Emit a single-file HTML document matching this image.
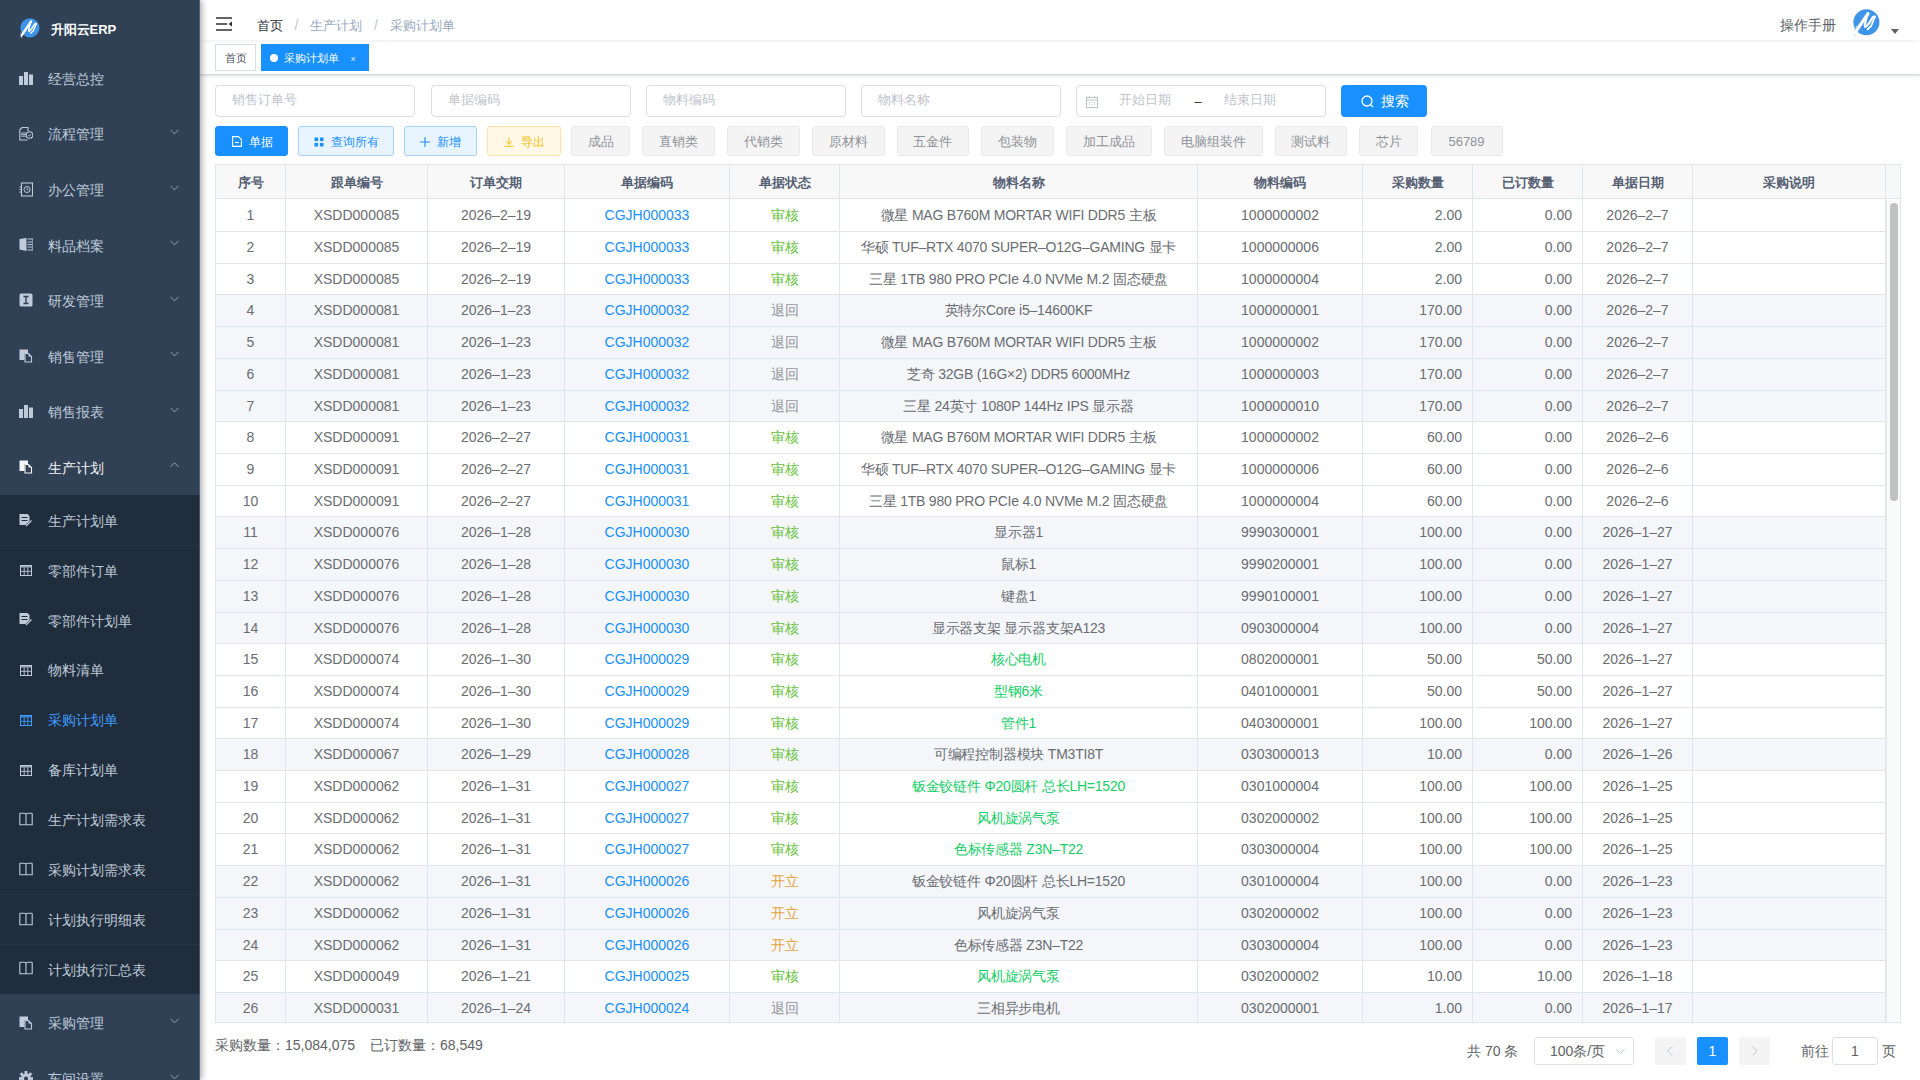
<!DOCTYPE html><html><head><meta charset="utf-8"><style>
*{box-sizing:border-box;margin:0;padding:0}
html,body{width:1920px;height:1080px;overflow:hidden;background:#fff;font-family:'Liberation Sans', sans-serif;color:#606266}
.abs{position:absolute}
#side{position:absolute;left:0;top:0;width:200px;height:1080px;background:#304156;box-shadow:2px 0 6px rgba(0,21,41,.35);z-index:5;overflow:hidden}
.mi{position:absolute;left:0;width:200px;color:#bfcbd9;font-size:14px;white-space:nowrap}
.mi .t{position:absolute;left:48px;top:0;font-size:13.5px}
.mi svg.ic{position:absolute;left:19px}
.mi svg.ch{position:absolute;left:170.2px}
.sub{position:absolute;left:0;width:200px;background:#1f2d3d}
.txt{position:absolute;white-space:nowrap}
.inp{position:absolute;top:84.5px;height:32.2px;border:1px solid #dcdfe6;border-radius:4px;background:#fff}
.inp span{position:absolute;left:16px;top:-0.3px;line-height:30px;font-size:13px;color:#c0c4cc}
.btn{position:absolute;top:126px;height:30px;border-radius:3px;font-size:12px;line-height:31px;text-align:center;border:1px solid}
.gbtn{background:#f4f4f5;border-color:#e9e9eb;color:#909399;font-size:13px;line-height:29.5px}
.cell{position:absolute;white-space:nowrap;font-size:14px;overflow:hidden}
</style></head><body>

<div id="side">
<svg class="abs" style="left:19.5px;top:17.6px;overflow:visible" width="20" height="20" viewBox="0 0 27 27">
<circle cx="13.4" cy="13.2" r="13" fill="#3d94e8"/>
<path d="M2.2 23.5 L15 4.6" stroke="#fff" stroke-width="3.2" stroke-linecap="round"/>
<path d="M15 4.6 Q13 9 12.3 13.7 Q11.4 17.6 12.2 17.8 Q14.5 17.5 19.7 8.3 Q21 7.2 22 7.7" stroke="#fff" stroke-width="2.2" fill="none" stroke-linecap="round" stroke-linejoin="round"/>
<path d="M22 7.7 L18 17.3 Q16 19 14.6 20.3" stroke="#fff" stroke-width="1.8" fill="none" stroke-linecap="round"/>
<circle cx="1.5" cy="20.5" r="1" fill="#9fc3ea"/><circle cx="3.2" cy="17.5" r="0.8" fill="#9fc3ea"/><circle cx="1.8" cy="26" r="0.9" fill="#9fc3ea"/>
</svg>
<div class="txt" style="left:50.5px;top:20.5px;font-size:13px;font-weight:bold;color:#fff;line-height:18px">升阳云ERP</div>
<div class="mi" style="top:50.70px;height:55.54px;color:#bfcbd9">
<svg class="ic" style="top:20px" width="14" height="15" viewBox="0 0 14 15"><rect x="0" y="5" width="4" height="9" fill="#bfcbd9"/><rect x="5" y="1" width="4" height="13" fill="#bfcbd9"/><rect x="10" y="3.5" width="4" height="10.5" fill="#bfcbd9"/></svg>
<div class="t" style="top:1.2px;line-height:55.54px">经营总控</div>
</div>
<div class="mi" style="top:106.24px;height:55.54px;color:#bfcbd9">
<svg class="ic" style="top:20px" width="14" height="15" viewBox="0 0 14 15"><path d="M3 1.5 H9 V5 M3 1.5 L0.8 3.8 V14 H8.5" stroke="#bfcbd9" stroke-width="1.1" fill="none"/><path d="M2 7h5M2 8.6h5M2 10.2h5" stroke="#bfcbd9" stroke-width="0.9"/><circle cx="10.5" cy="9" r="3.3" stroke="#bfcbd9" stroke-width="1.1" fill="none"/><path d="M9.3 9.2l1 1 1.6-2" stroke="#bfcbd9" stroke-width="0.9" fill="none"/></svg>
<div class="t" style="top:1.2px;line-height:55.54px">流程管理</div>
<svg class="ch" style="top:23px" width="9" height="6" viewBox="0 0 9 6"><path d="M0.5 0.8 L4.5 4.8 L8.5 0.8" stroke="#a3adbb" stroke-width="0.9" fill="none"/></svg>
</div>
<div class="mi" style="top:161.78px;height:55.54px;color:#bfcbd9">
<svg class="ic" style="top:20px" width="14" height="15" viewBox="0 0 14 15"><rect x="2.5" y="1" width="11" height="13" stroke="#bfcbd9" stroke-width="1.1" fill="none"/><circle cx="8" cy="7.5" r="3" stroke="#bfcbd9" stroke-width="1" fill="none"/><path d="M8 6v1.7h1.3" stroke="#bfcbd9" stroke-width="0.9" fill="none"/><path d="M0.5 5h2M0.5 7.5h2M0.5 10h2" stroke="#bfcbd9" stroke-width="1"/></svg>
<div class="t" style="top:1.2px;line-height:55.54px">办公管理</div>
<svg class="ch" style="top:23px" width="9" height="6" viewBox="0 0 9 6"><path d="M0.5 0.8 L4.5 4.8 L8.5 0.8" stroke="#a3adbb" stroke-width="0.9" fill="none"/></svg>
</div>
<div class="mi" style="top:217.32px;height:55.54px;color:#bfcbd9">
<svg class="ic" style="top:20px" width="14" height="15" viewBox="0 0 14 15"><path d="M0.5 2 L7.5 1 V14 L0.5 12.5 Z" fill="#bfcbd9"/><path d="M8.5 2h5.5v11h-5.5" stroke="#bfcbd9" stroke-width="1.1" fill="none"/><path d="M8.5 5h5M8.5 7.5h5M8.5 10h5" stroke="#bfcbd9" stroke-width="1"/></svg>
<div class="t" style="top:1.2px;line-height:55.54px">料品档案</div>
<svg class="ch" style="top:23px" width="9" height="6" viewBox="0 0 9 6"><path d="M0.5 0.8 L4.5 4.8 L8.5 0.8" stroke="#a3adbb" stroke-width="0.9" fill="none"/></svg>
</div>
<div class="mi" style="top:272.86px;height:55.54px;color:#bfcbd9">
<svg class="ic" style="top:20px" width="14" height="15" viewBox="0 0 14 15"><rect x="0.5" y="0.5" width="13" height="13" rx="1.5" fill="#bfcbd9"/><path d="M4.5 3.5h5M7 3.5v7M4.5 10.5h5" stroke="#304156" stroke-width="1.4"/></svg>
<div class="t" style="top:1.2px;line-height:55.54px">研发管理</div>
<svg class="ch" style="top:23px" width="9" height="6" viewBox="0 0 9 6"><path d="M0.5 0.8 L4.5 4.8 L8.5 0.8" stroke="#a3adbb" stroke-width="0.9" fill="none"/></svg>
</div>
<div class="mi" style="top:328.40px;height:55.54px;color:#bfcbd9">
<svg class="ic" style="top:20px" width="14" height="15" viewBox="0 0 14 15"><path d="M0.5 1.5 H9 V5 H5.5 V12 H0.5 Z" fill="#bfcbd9"/><path d="M6 5.5 H9.5 L12.5 8.5 V14 H6 Z" stroke="#bfcbd9" stroke-width="1.1" fill="none"/><path d="M9.5 5.5 V8.5 H12.5" fill="#bfcbd9"/></svg>
<div class="t" style="top:1.2px;line-height:55.54px">销售管理</div>
<svg class="ch" style="top:23px" width="9" height="6" viewBox="0 0 9 6"><path d="M0.5 0.8 L4.5 4.8 L8.5 0.8" stroke="#a3adbb" stroke-width="0.9" fill="none"/></svg>
</div>
<div class="mi" style="top:383.94px;height:55.54px;color:#bfcbd9">
<svg class="ic" style="top:20px" width="14" height="15" viewBox="0 0 14 15"><rect x="0" y="5" width="4" height="9" fill="#bfcbd9"/><rect x="5" y="1" width="4" height="13" fill="#bfcbd9"/><rect x="10" y="3.5" width="4" height="10.5" fill="#bfcbd9"/></svg>
<div class="t" style="top:1.2px;line-height:55.54px">销售报表</div>
<svg class="ch" style="top:23px" width="9" height="6" viewBox="0 0 9 6"><path d="M0.5 0.8 L4.5 4.8 L8.5 0.8" stroke="#a3adbb" stroke-width="0.9" fill="none"/></svg>
</div>
<div class="mi" style="top:439.48px;height:55.54px;color:#f4f4f5">
<svg class="ic" style="top:20px" width="14" height="15" viewBox="0 0 14 15"><path d="M0.5 1.5 H9 V5 H5.5 V12 H0.5 Z" fill="#f4f4f5"/><path d="M6 5.5 H9.5 L12.5 8.5 V14 H6 Z" stroke="#f4f4f5" stroke-width="1.1" fill="none"/><path d="M9.5 5.5 V8.5 H12.5" fill="#f4f4f5"/></svg>
<div class="t" style="top:1.2px;line-height:55.54px">生产计划</div>
<svg class="ch" style="top:23px" width="9" height="6" viewBox="0 0 9 6"><path d="M0.5 4.8 L4.5 0.8 L8.5 4.8" stroke="#a3adbb" stroke-width="0.9" fill="none"/></svg>
</div>
<div class="sub" style="top:495px;height:498.75px"></div>
<div class="abs" style="left:0;top:545px;width:200px;height:1px;background:#263345"></div>
<div class="abs" style="left:0;top:894px;width:200px;height:1px;background:#263345"></div>
<div class="abs" style="left:0;top:944px;width:200px;height:1px;background:#263345"></div>
<div class="mi" style="top:495.00px;height:49.875px;color:#bfcbd9">
<svg class="ic" style="top:17.5px" width="14" height="15" viewBox="0 0 14 15"><path d="M0.5 1 H8.5 L10.5 3 V8 L6.5 12 H0.5 Z" fill="#bfcbd9"/><path d="M2.5 4.5h6M2.5 7.5h6" stroke="#1f2d3d" stroke-width="1.1"/><path d="M7 13 L12.5 7.5" stroke="#bfcbd9" stroke-width="1.2"/></svg>
<div class="t" style="top:1.8px;line-height:49.875px">生产计划单</div>
</div>
<div class="mi" style="top:544.88px;height:49.875px;color:#bfcbd9">
<svg class="ic" style="top:17.5px" width="14" height="15" viewBox="0 0 14 15"><rect x="1.5" y="3.5" width="11" height="10" stroke="#bfcbd9" stroke-width="1" fill="none"/><rect x="1" y="3" width="12" height="2.6" fill="#bfcbd9" opacity="0.75"/><path d="M1.5 9.3h11M5.2 5.5v8M8.8 5.5v8" stroke="#bfcbd9" stroke-width="0.9"/></svg>
<div class="t" style="top:1.8px;line-height:49.875px">零部件订单</div>
</div>
<div class="mi" style="top:594.75px;height:49.875px;color:#bfcbd9">
<svg class="ic" style="top:17.5px" width="14" height="15" viewBox="0 0 14 15"><path d="M0.5 1 H8.5 L10.5 3 V8 L6.5 12 H0.5 Z" fill="#bfcbd9"/><path d="M2.5 4.5h6M2.5 7.5h6" stroke="#1f2d3d" stroke-width="1.1"/><path d="M7 13 L12.5 7.5" stroke="#bfcbd9" stroke-width="1.2"/></svg>
<div class="t" style="top:1.8px;line-height:49.875px">零部件计划单</div>
</div>
<div class="mi" style="top:644.62px;height:49.875px;color:#bfcbd9">
<svg class="ic" style="top:17.5px" width="14" height="15" viewBox="0 0 14 15"><rect x="1.5" y="3.5" width="11" height="10" stroke="#bfcbd9" stroke-width="1" fill="none"/><rect x="1" y="3" width="12" height="2.6" fill="#bfcbd9" opacity="0.75"/><path d="M1.5 9.3h11M5.2 5.5v8M8.8 5.5v8" stroke="#bfcbd9" stroke-width="0.9"/></svg>
<div class="t" style="top:1.8px;line-height:49.875px">物料清单</div>
</div>
<div class="mi" style="top:694.50px;height:49.875px;color:#409eff">
<svg class="ic" style="top:17.5px" width="14" height="15" viewBox="0 0 14 15"><rect x="1.5" y="3.5" width="11" height="10" stroke="#409eff" stroke-width="1" fill="none"/><rect x="1" y="3" width="12" height="2.6" fill="#409eff" opacity="0.75"/><path d="M1.5 9.3h11M5.2 5.5v8M8.8 5.5v8" stroke="#409eff" stroke-width="0.9"/></svg>
<div class="t" style="top:1.8px;line-height:49.875px">采购计划单</div>
</div>
<div class="mi" style="top:744.38px;height:49.875px;color:#bfcbd9">
<svg class="ic" style="top:17.5px" width="14" height="15" viewBox="0 0 14 15"><rect x="1.5" y="3.5" width="11" height="10" stroke="#bfcbd9" stroke-width="1" fill="none"/><rect x="1" y="3" width="12" height="2.6" fill="#bfcbd9" opacity="0.75"/><path d="M1.5 9.3h11M5.2 5.5v8M8.8 5.5v8" stroke="#bfcbd9" stroke-width="0.9"/></svg>
<div class="t" style="top:1.8px;line-height:49.875px">备库计划单</div>
</div>
<div class="mi" style="top:794.25px;height:49.875px;color:#bfcbd9">
<svg class="ic" style="top:17.5px" width="14" height="15" viewBox="0 0 14 15"><path d="M0.8 1.2 H5.5 Q7 1.2 7 2.5 V13 M13.2 1.2 H8.5 Q7 1.2 7 2.5 M0.8 1.2 V12.8 H13.2 V1.2" stroke="#bfcbd9" stroke-width="1.1" fill="none"/></svg>
<div class="t" style="top:1.8px;line-height:49.875px">生产计划需求表</div>
</div>
<div class="mi" style="top:844.12px;height:49.875px;color:#bfcbd9">
<svg class="ic" style="top:17.5px" width="14" height="15" viewBox="0 0 14 15"><path d="M0.8 1.2 H5.5 Q7 1.2 7 2.5 V13 M13.2 1.2 H8.5 Q7 1.2 7 2.5 M0.8 1.2 V12.8 H13.2 V1.2" stroke="#bfcbd9" stroke-width="1.1" fill="none"/></svg>
<div class="t" style="top:1.8px;line-height:49.875px">采购计划需求表</div>
</div>
<div class="mi" style="top:894.00px;height:49.875px;color:#bfcbd9">
<svg class="ic" style="top:17.5px" width="14" height="15" viewBox="0 0 14 15"><path d="M0.8 1.2 H5.5 Q7 1.2 7 2.5 V13 M13.2 1.2 H8.5 Q7 1.2 7 2.5 M0.8 1.2 V12.8 H13.2 V1.2" stroke="#bfcbd9" stroke-width="1.1" fill="none"/></svg>
<div class="t" style="top:1.8px;line-height:49.875px">计划执行明细表</div>
</div>
<div class="mi" style="top:943.88px;height:49.875px;color:#bfcbd9">
<svg class="ic" style="top:17.5px" width="14" height="15" viewBox="0 0 14 15"><path d="M0.8 1.2 H5.5 Q7 1.2 7 2.5 V13 M13.2 1.2 H8.5 Q7 1.2 7 2.5 M0.8 1.2 V12.8 H13.2 V1.2" stroke="#bfcbd9" stroke-width="1.1" fill="none"/></svg>
<div class="t" style="top:1.8px;line-height:49.875px">计划执行汇总表</div>
</div>
<div class="mi" style="top:995.05px;height:55.54px">
<svg class="ic" style="top:20px" width="14" height="15" viewBox="0 0 14 15"><path d="M0.5 1.5 H9 V5 H5.5 V12 H0.5 Z" fill="#bfcbd9"/><path d="M6 5.5 H9.5 L12.5 8.5 V14 H6 Z" stroke="#bfcbd9" stroke-width="1.1" fill="none"/><path d="M9.5 5.5 V8.5 H12.5" fill="#bfcbd9"/></svg>
<div class="t" style="top:1.2px;line-height:55.54px">采购管理</div>
<svg class="ch" style="top:23px" width="9" height="6" viewBox="0 0 9 6"><path d="M0.5 0.8 L4.5 4.8 L8.5 0.8" stroke="#a3adbb" stroke-width="0.9" fill="none"/></svg>
</div>
<div class="mi" style="top:1050.59px;height:55.54px">
<svg class="ic" style="top:20px" width="14" height="15" viewBox="0 0 14 15"><g><rect x="5.6" y="0" width="2.8" height="3" fill="#bfcbd9" transform="rotate(0 7 7.5)"/><rect x="5.6" y="0" width="2.8" height="3" fill="#bfcbd9" transform="rotate(45 7 7.5)"/><rect x="5.6" y="0" width="2.8" height="3" fill="#bfcbd9" transform="rotate(90 7 7.5)"/><rect x="5.6" y="0" width="2.8" height="3" fill="#bfcbd9" transform="rotate(135 7 7.5)"/><rect x="5.6" y="0" width="2.8" height="3" fill="#bfcbd9" transform="rotate(180 7 7.5)"/><rect x="5.6" y="0" width="2.8" height="3" fill="#bfcbd9" transform="rotate(225 7 7.5)"/><rect x="5.6" y="0" width="2.8" height="3" fill="#bfcbd9" transform="rotate(270 7 7.5)"/><rect x="5.6" y="0" width="2.8" height="3" fill="#bfcbd9" transform="rotate(315 7 7.5)"/><circle cx="7" cy="7.5" r="5" fill="#bfcbd9"/><circle cx="7" cy="7.5" r="2" fill="#304156"/></g></svg>
<div class="t" style="top:1.2px;line-height:55.54px">车间设置</div>
<svg class="ch" style="top:23px" width="9" height="6" viewBox="0 0 9 6"><path d="M0.5 0.8 L4.5 4.8 L8.5 0.8" stroke="#a3adbb" stroke-width="0.9" fill="none"/></svg>
</div>
<div class="abs" style="left:199px;top:0;width:1px;height:1080px;background:rgba(255,255,255,.18)"></div>
</div>
<div class="abs" style="left:200px;top:0;width:1720px;height:40px;background:#fff;box-shadow:0 1px 4px rgba(0,21,41,.08);z-index:2"></div>
<svg class="abs" style="left:216px;top:17px;z-index:3" width="16" height="14" viewBox="0 0 16 14">
<path d="M0 1h16M0 7h11M0 13h16" stroke="#303133" stroke-width="1.6"/><path d="M16 4.5 L12.5 7 L16 9.5Z" fill="#303133"/></svg>
<div class="txt" style="left:257px;top:16.5px;font-size:13.2px;line-height:18px;z-index:3;color:#303133">首页</div>
<div class="txt" style="left:294.5px;top:16px;font-size:14px;line-height:18px;z-index:3;color:#c0c4cc">/</div>
<div class="txt" style="left:309.5px;top:16.5px;font-size:13.2px;line-height:18px;z-index:3;color:#97a8be">生产计划</div>
<div class="txt" style="left:374px;top:16px;font-size:14px;line-height:18px;z-index:3;color:#c0c4cc">/</div>
<div class="txt" style="left:389.5px;top:16.5px;font-size:13.2px;line-height:18px;z-index:3;color:#97a8be">采购计划单</div>
<div class="txt" style="left:1780px;top:16px;font-size:14px;line-height:18px;z-index:3;color:#5a5e66">操作手册</div>
<svg class="abs" style="left:1852.6px;top:8.8px;z-index:3;overflow:visible" width="27" height="27" viewBox="0 0 27 27">
<circle cx="13.4" cy="13.2" r="13" fill="#3d94e8"/>
<path d="M2.2 23.5 L15 4.6" stroke="#fff" stroke-width="3.2" stroke-linecap="round"/>
<path d="M15 4.6 Q13 9 12.3 13.7 Q11.4 17.6 12.2 17.8 Q14.5 17.5 19.7 8.3 Q21 7.2 22 7.7" stroke="#fff" stroke-width="2.2" fill="none" stroke-linecap="round" stroke-linejoin="round"/>
<path d="M22 7.7 L18 17.3 Q16 19 14.6 20.3" stroke="#fff" stroke-width="1.8" fill="none" stroke-linecap="round"/>
<circle cx="1.5" cy="20.5" r="1" fill="#cfe3fa"/><circle cx="3.2" cy="17.5" r="0.8" fill="#cfe3fa"/><circle cx="1.8" cy="26" r="0.9" fill="#cfe3fa"/>
</svg>
<svg class="abs" style="left:1891px;top:28.8px;z-index:3" width="8" height="5" viewBox="0 0 8 5"><path d="M0 0H8L4 5Z" fill="#606266"/></svg>
<div class="abs" style="left:200px;top:40px;width:1720px;height:35px;background:#fff;border-bottom:1px solid #d8dce5;box-shadow:0 1px 3px 0 rgba(0,0,0,.12),0 0 3px 0 rgba(0,0,0,.04);z-index:1"></div>
<div class="abs" style="left:215px;top:44px;width:41px;height:27px;border:1px solid #d8dce5;background:#fff;z-index:3;font-size:11px;line-height:27px;color:#495060;text-align:center">首页</div>
<div class="abs" style="left:261px;top:44px;width:108px;height:27px;background:#1890ff;border:1px solid #1890ff;z-index:3;font-size:11.5px;line-height:26px;color:#fff"><span class="abs" style="left:8px;top:9px;width:8px;height:8px;border-radius:4px;background:#fff"></span><span class="abs" style="left:21.5px;top:0;font-size:11px">采购计划单</span><span class="abs" style="left:88.5px;top:1px;font-size:9px;opacity:.85">×</span></div>
<div class="inp" style="left:215px;width:200px"><span>销售订单号</span></div>
<div class="inp" style="left:430.5px;width:200px"><span>单据编码</span></div>
<div class="inp" style="left:646px;width:199.5px"><span>物料编码</span></div>
<div class="inp" style="left:861.25px;width:199.5px"><span>物料名称</span></div>
<div class="inp" style="left:1076px;width:250px"><svg class="abs" style="left:9px;top:10.2px" width="12" height="12" viewBox="0 0 12 12"><rect x="0.5" y="1.5" width="11" height="10" stroke="#c0c4cc" fill="none"/><path d="M0.5 4h11M3.5 0v2M8.5 0v2" stroke="#c0c4cc"/><path d="M3 6.5h1M5.5 6.5h1M8 6.5h1M3 8.7h1M5.5 8.7h1M8 8.7h1" stroke="#c0c4cc"/></svg><span style="left:42px">开始日期</span><span style="left:117.5px;top:1.5px;color:#303133">–</span><span style="left:147px">结束日期</span></div>
<div class="abs" style="left:1341px;top:85px;width:86px;height:32px;background:#1890ff;border-radius:4px;color:#fff;font-size:14px;line-height:32px"><svg class="abs" style="left:20px;top:10px" width="13" height="13" viewBox="0 0 13 13"><circle cx="6" cy="6" r="5" stroke="#fff" stroke-width="1.3" fill="none"/><path d="M9.5 9.5l2.5 2.5" stroke="#fff" stroke-width="1.3"/></svg><span class="abs" style="left:40px;top:0">搜索</span></div>
<div class="btn" style="left:215px;width:73px;background:#1890ff;border-color:#1890ff;color:#fff"><svg style="vertical-align:-1px;margin-right:7px;margin-left:2px" width="10" height="11" viewBox="0 0 10 11"><path d="M0.6 0.6H6.5L9.4 3.5V10.4H0.6Z" stroke="#fff" stroke-width="1.1" fill="none"/><path d="M3 6.5h4" stroke="#fff" stroke-width="1.1"/></svg>单据</div>
<div class="btn" style="left:298px;width:96px;background:#e8f4ff;border-color:#a3d3ff;color:#1890ff"><svg style="vertical-align:-1px;margin-right:7px" width="10" height="10" viewBox="0 0 10 10"><rect x="0.5" y="0.5" width="3.6" height="3.6" fill="#1890ff"/><rect x="5.9" y="0.5" width="3.6" height="3.6" fill="#1890ff"/><rect x="0.5" y="5.9" width="3.6" height="3.6" fill="#1890ff"/><rect x="5.9" y="5.9" width="3.6" height="3.6" fill="#1890ff"/></svg>查询所有</div>
<div class="btn" style="left:404px;width:73px;background:#e8f4ff;border-color:#a3d3ff;color:#1890ff"><svg style="vertical-align:-1px;margin-right:7px" width="10" height="10" viewBox="0 0 10 10"><path d="M5 0v10M0 5h10" stroke="#1890ff" stroke-width="1.1"/></svg>新增</div>
<div class="btn" style="left:487px;width:73.5px;background:#fff8e6;border-color:#ffe2a3;color:#ffba00"><svg style="vertical-align:-1px;margin-right:7px;margin-left:2px" width="10" height="10" viewBox="0 0 10 10"><path d="M5 0.5v6.8M1.8 4.3l3.2 3.1 3.2-3.1M0.5 9.3h9" stroke="#ffba00" stroke-width="0.95" fill="none"/></svg>导出</div>
<div class="btn gbtn" style="left:571px;width:59px;">成品</div>
<div class="btn gbtn" style="left:642px;width:73px;">直销类</div>
<div class="btn gbtn" style="left:727px;width:72.5px;">代销类</div>
<div class="btn gbtn" style="left:812px;width:72.5px;">原材料</div>
<div class="btn gbtn" style="left:896.5px;width:72.5px;">五金件</div>
<div class="btn gbtn" style="left:981px;width:72.5px;">包装物</div>
<div class="btn gbtn" style="left:1065.5px;width:86px;">加工成品</div>
<div class="btn gbtn" style="left:1163.5px;width:99px;">电脑组装件</div>
<div class="btn gbtn" style="left:1274.5px;width:72.5px;">测试料</div>
<div class="btn gbtn" style="left:1359.25px;width:59px;">芯片</div>
<div class="btn gbtn" style="left:1430.5px;width:72px;">56789</div>
<div class="abs" style="left:215px;top:164px;width:1686px;height:859px;border:1px solid #dfe6ec;background:#fff;overflow:hidden">
<div class="abs" style="left:0;top:0;width:100%;height:34.40px;background:#f8f8f9;border-bottom:1px solid #dfe6ec"></div>
<div class="cell" style="left:0px;top:1px;width:69px;height:34.40px;line-height:34.40px;text-align:center;font-weight:bold;font-size:13.2px;color:#566073">序号</div>
<div class="cell" style="left:70px;top:1px;width:141px;height:34.40px;line-height:34.40px;text-align:center;font-weight:bold;font-size:13.2px;color:#566073">跟单编号</div>
<div class="cell" style="left:212px;top:1px;width:136px;height:34.40px;line-height:34.40px;text-align:center;font-weight:bold;font-size:13.2px;color:#566073">订单交期</div>
<div class="cell" style="left:349px;top:1px;width:164px;height:34.40px;line-height:34.40px;text-align:center;font-weight:bold;font-size:13.2px;color:#566073">单据编码</div>
<div class="cell" style="left:514px;top:1px;width:109px;height:34.40px;line-height:34.40px;text-align:center;font-weight:bold;font-size:13.2px;color:#566073">单据状态</div>
<div class="cell" style="left:624px;top:1px;width:357px;height:34.40px;line-height:34.40px;text-align:center;font-weight:bold;font-size:13.2px;color:#566073">物料名称</div>
<div class="cell" style="left:982px;top:1px;width:164px;height:34.40px;line-height:34.40px;text-align:center;font-weight:bold;font-size:13.2px;color:#566073">物料编码</div>
<div class="cell" style="left:1147px;top:1px;width:109px;height:34.40px;line-height:34.40px;text-align:center;font-weight:bold;font-size:13.2px;color:#566073">采购数量</div>
<div class="cell" style="left:1257px;top:1px;width:109px;height:34.40px;line-height:34.40px;text-align:center;font-weight:bold;font-size:13.2px;color:#566073">已订数量</div>
<div class="cell" style="left:1367px;top:1px;width:109px;height:34.40px;line-height:34.40px;text-align:center;font-weight:bold;font-size:13.2px;color:#566073">单据日期</div>
<div class="cell" style="left:1477px;top:1px;width:192px;height:34.40px;line-height:34.40px;text-align:center;font-weight:bold;font-size:13.2px;color:#566073">采购说明</div>
<div class="abs" style="left:69px;top:0;width:1px;height:1000px;background:#dfe6ec"></div>
<div class="abs" style="left:211px;top:0;width:1px;height:1000px;background:#dfe6ec"></div>
<div class="abs" style="left:348px;top:0;width:1px;height:1000px;background:#dfe6ec"></div>
<div class="abs" style="left:513px;top:0;width:1px;height:1000px;background:#dfe6ec"></div>
<div class="abs" style="left:623px;top:0;width:1px;height:1000px;background:#dfe6ec"></div>
<div class="abs" style="left:981px;top:0;width:1px;height:1000px;background:#dfe6ec"></div>
<div class="abs" style="left:1146px;top:0;width:1px;height:1000px;background:#dfe6ec"></div>
<div class="abs" style="left:1256px;top:0;width:1px;height:1000px;background:#dfe6ec"></div>
<div class="abs" style="left:1366px;top:0;width:1px;height:1000px;background:#dfe6ec"></div>
<div class="abs" style="left:1476px;top:0;width:1px;height:1000px;background:#dfe6ec"></div>
<div class="abs" style="left:1669px;top:0;width:1px;height:1000px;background:#dfe6ec"></div>
<div class="abs" style="left:0;top:34px;width:1669px;height:32px;background:#fff"></div>
<div class="abs" style="left:0;top:66px;width:1669px;height:1px;background:#dfe6ec"></div>
<div class="cell" style="left:0px;top:34.29px;width:69px;height:32px;line-height:32px;text-align:center;color:#6a6d72">1</div>
<div class="cell" style="left:70px;top:34.29px;width:141px;height:32px;line-height:32px;text-align:center;color:#6a6d72">XSDD000085</div>
<div class="cell" style="left:212px;top:34.29px;width:136px;height:32px;line-height:32px;text-align:center;color:#6a6d72">2026–2–19</div>
<div class="cell" style="left:349px;top:34.29px;width:164px;height:32px;line-height:32px;text-align:center;color:#1890ff">CGJH000033</div>
<div class="cell" style="left:514px;top:34.29px;width:109px;height:32px;line-height:32px;text-align:center;color:#67c23a">审核</div>
<div class="cell" style="left:624px;top:34.29px;width:357px;height:32px;line-height:32px;text-align:center;letter-spacing:-0.22px;color:#6a6d72">微星 MAG B760M MORTAR WIFI DDR5 主板</div>
<div class="cell" style="left:982px;top:34.29px;width:164px;height:32px;line-height:32px;text-align:center;color:#6a6d72">1000000002</div>
<div class="cell" style="left:1147px;top:34.29px;width:109px;height:32px;line-height:32px;text-align:right;padding-right:10px;color:#6a6d72">2.00</div>
<div class="cell" style="left:1257px;top:34.29px;width:109px;height:32px;line-height:32px;text-align:right;padding-right:10px;color:#6a6d72">0.00</div>
<div class="cell" style="left:1367px;top:34.29px;width:109px;height:32px;line-height:32px;text-align:center;color:#6a6d72">2026–2–7</div>
<div class="abs" style="left:0;top:67px;width:1669px;height:31px;background:#fff"></div>
<div class="abs" style="left:0;top:98px;width:1669px;height:1px;background:#dfe6ec"></div>
<div class="cell" style="left:0px;top:66.00px;width:69px;height:32px;line-height:32px;text-align:center;color:#6a6d72">2</div>
<div class="cell" style="left:70px;top:66.00px;width:141px;height:32px;line-height:32px;text-align:center;color:#6a6d72">XSDD000085</div>
<div class="cell" style="left:212px;top:66.00px;width:136px;height:32px;line-height:32px;text-align:center;color:#6a6d72">2026–2–19</div>
<div class="cell" style="left:349px;top:66.00px;width:164px;height:32px;line-height:32px;text-align:center;color:#1890ff">CGJH000033</div>
<div class="cell" style="left:514px;top:66.00px;width:109px;height:32px;line-height:32px;text-align:center;color:#67c23a">审核</div>
<div class="cell" style="left:624px;top:66.00px;width:357px;height:32px;line-height:32px;text-align:center;letter-spacing:-0.22px;color:#6a6d72">华硕 TUF–RTX 4070 SUPER–O12G–GAMING 显卡</div>
<div class="cell" style="left:982px;top:66.00px;width:164px;height:32px;line-height:32px;text-align:center;color:#6a6d72">1000000006</div>
<div class="cell" style="left:1147px;top:66.00px;width:109px;height:32px;line-height:32px;text-align:right;padding-right:10px;color:#6a6d72">2.00</div>
<div class="cell" style="left:1257px;top:66.00px;width:109px;height:32px;line-height:32px;text-align:right;padding-right:10px;color:#6a6d72">0.00</div>
<div class="cell" style="left:1367px;top:66.00px;width:109px;height:32px;line-height:32px;text-align:center;color:#6a6d72">2026–2–7</div>
<div class="abs" style="left:0;top:99px;width:1669px;height:30px;background:#fff"></div>
<div class="abs" style="left:0;top:129px;width:1669px;height:1px;background:#dfe6ec"></div>
<div class="cell" style="left:0px;top:97.71px;width:69px;height:32px;line-height:32px;text-align:center;color:#6a6d72">3</div>
<div class="cell" style="left:70px;top:97.71px;width:141px;height:32px;line-height:32px;text-align:center;color:#6a6d72">XSDD000085</div>
<div class="cell" style="left:212px;top:97.71px;width:136px;height:32px;line-height:32px;text-align:center;color:#6a6d72">2026–2–19</div>
<div class="cell" style="left:349px;top:97.71px;width:164px;height:32px;line-height:32px;text-align:center;color:#1890ff">CGJH000033</div>
<div class="cell" style="left:514px;top:97.71px;width:109px;height:32px;line-height:32px;text-align:center;color:#67c23a">审核</div>
<div class="cell" style="left:624px;top:97.71px;width:357px;height:32px;line-height:32px;text-align:center;letter-spacing:-0.22px;color:#6a6d72">三星 1TB 980 PRO PCIe 4.0 NVMe M.2 固态硬盘</div>
<div class="cell" style="left:982px;top:97.71px;width:164px;height:32px;line-height:32px;text-align:center;color:#6a6d72">1000000004</div>
<div class="cell" style="left:1147px;top:97.71px;width:109px;height:32px;line-height:32px;text-align:right;padding-right:10px;color:#6a6d72">2.00</div>
<div class="cell" style="left:1257px;top:97.71px;width:109px;height:32px;line-height:32px;text-align:right;padding-right:10px;color:#6a6d72">0.00</div>
<div class="cell" style="left:1367px;top:97.71px;width:109px;height:32px;line-height:32px;text-align:center;color:#6a6d72">2026–2–7</div>
<div class="abs" style="left:0;top:130px;width:1669px;height:31px;background:#f4f6fa"></div>
<div class="abs" style="left:0;top:161px;width:1669px;height:1px;background:#dfe6ec"></div>
<div class="cell" style="left:0px;top:129.42px;width:69px;height:32px;line-height:32px;text-align:center;color:#6a6d72">4</div>
<div class="cell" style="left:70px;top:129.42px;width:141px;height:32px;line-height:32px;text-align:center;color:#6a6d72">XSDD000081</div>
<div class="cell" style="left:212px;top:129.42px;width:136px;height:32px;line-height:32px;text-align:center;color:#6a6d72">2026–1–23</div>
<div class="cell" style="left:349px;top:129.42px;width:164px;height:32px;line-height:32px;text-align:center;color:#1890ff">CGJH000032</div>
<div class="cell" style="left:514px;top:129.42px;width:109px;height:32px;line-height:32px;text-align:center;color:#909399">退回</div>
<div class="cell" style="left:624px;top:129.42px;width:357px;height:32px;line-height:32px;text-align:center;letter-spacing:-0.22px;color:#6a6d72">英特尔Core i5–14600KF</div>
<div class="cell" style="left:982px;top:129.42px;width:164px;height:32px;line-height:32px;text-align:center;color:#6a6d72">1000000001</div>
<div class="cell" style="left:1147px;top:129.42px;width:109px;height:32px;line-height:32px;text-align:right;padding-right:10px;color:#6a6d72">170.00</div>
<div class="cell" style="left:1257px;top:129.42px;width:109px;height:32px;line-height:32px;text-align:right;padding-right:10px;color:#6a6d72">0.00</div>
<div class="cell" style="left:1367px;top:129.42px;width:109px;height:32px;line-height:32px;text-align:center;color:#6a6d72">2026–2–7</div>
<div class="abs" style="left:0;top:162px;width:1669px;height:31px;background:#f4f6fa"></div>
<div class="abs" style="left:0;top:193px;width:1669px;height:1px;background:#dfe6ec"></div>
<div class="cell" style="left:0px;top:161.13px;width:69px;height:32px;line-height:32px;text-align:center;color:#6a6d72">5</div>
<div class="cell" style="left:70px;top:161.13px;width:141px;height:32px;line-height:32px;text-align:center;color:#6a6d72">XSDD000081</div>
<div class="cell" style="left:212px;top:161.13px;width:136px;height:32px;line-height:32px;text-align:center;color:#6a6d72">2026–1–23</div>
<div class="cell" style="left:349px;top:161.13px;width:164px;height:32px;line-height:32px;text-align:center;color:#1890ff">CGJH000032</div>
<div class="cell" style="left:514px;top:161.13px;width:109px;height:32px;line-height:32px;text-align:center;color:#909399">退回</div>
<div class="cell" style="left:624px;top:161.13px;width:357px;height:32px;line-height:32px;text-align:center;letter-spacing:-0.22px;color:#6a6d72">微星 MAG B760M MORTAR WIFI DDR5 主板</div>
<div class="cell" style="left:982px;top:161.13px;width:164px;height:32px;line-height:32px;text-align:center;color:#6a6d72">1000000002</div>
<div class="cell" style="left:1147px;top:161.13px;width:109px;height:32px;line-height:32px;text-align:right;padding-right:10px;color:#6a6d72">170.00</div>
<div class="cell" style="left:1257px;top:161.13px;width:109px;height:32px;line-height:32px;text-align:right;padding-right:10px;color:#6a6d72">0.00</div>
<div class="cell" style="left:1367px;top:161.13px;width:109px;height:32px;line-height:32px;text-align:center;color:#6a6d72">2026–2–7</div>
<div class="abs" style="left:0;top:194px;width:1669px;height:31px;background:#f4f6fa"></div>
<div class="abs" style="left:0;top:225px;width:1669px;height:1px;background:#dfe6ec"></div>
<div class="cell" style="left:0px;top:192.84px;width:69px;height:32px;line-height:32px;text-align:center;color:#6a6d72">6</div>
<div class="cell" style="left:70px;top:192.84px;width:141px;height:32px;line-height:32px;text-align:center;color:#6a6d72">XSDD000081</div>
<div class="cell" style="left:212px;top:192.84px;width:136px;height:32px;line-height:32px;text-align:center;color:#6a6d72">2026–1–23</div>
<div class="cell" style="left:349px;top:192.84px;width:164px;height:32px;line-height:32px;text-align:center;color:#1890ff">CGJH000032</div>
<div class="cell" style="left:514px;top:192.84px;width:109px;height:32px;line-height:32px;text-align:center;color:#909399">退回</div>
<div class="cell" style="left:624px;top:192.84px;width:357px;height:32px;line-height:32px;text-align:center;letter-spacing:-0.22px;color:#6a6d72">芝奇 32GB (16G×2) DDR5 6000MHz</div>
<div class="cell" style="left:982px;top:192.84px;width:164px;height:32px;line-height:32px;text-align:center;color:#6a6d72">1000000003</div>
<div class="cell" style="left:1147px;top:192.84px;width:109px;height:32px;line-height:32px;text-align:right;padding-right:10px;color:#6a6d72">170.00</div>
<div class="cell" style="left:1257px;top:192.84px;width:109px;height:32px;line-height:32px;text-align:right;padding-right:10px;color:#6a6d72">0.00</div>
<div class="cell" style="left:1367px;top:192.84px;width:109px;height:32px;line-height:32px;text-align:center;color:#6a6d72">2026–2–7</div>
<div class="abs" style="left:0;top:226px;width:1669px;height:30px;background:#f4f6fa"></div>
<div class="abs" style="left:0;top:256px;width:1669px;height:1px;background:#dfe6ec"></div>
<div class="cell" style="left:0px;top:224.55px;width:69px;height:32px;line-height:32px;text-align:center;color:#6a6d72">7</div>
<div class="cell" style="left:70px;top:224.55px;width:141px;height:32px;line-height:32px;text-align:center;color:#6a6d72">XSDD000081</div>
<div class="cell" style="left:212px;top:224.55px;width:136px;height:32px;line-height:32px;text-align:center;color:#6a6d72">2026–1–23</div>
<div class="cell" style="left:349px;top:224.55px;width:164px;height:32px;line-height:32px;text-align:center;color:#1890ff">CGJH000032</div>
<div class="cell" style="left:514px;top:224.55px;width:109px;height:32px;line-height:32px;text-align:center;color:#909399">退回</div>
<div class="cell" style="left:624px;top:224.55px;width:357px;height:32px;line-height:32px;text-align:center;letter-spacing:-0.22px;color:#6a6d72">三星 24英寸 1080P 144Hz IPS 显示器</div>
<div class="cell" style="left:982px;top:224.55px;width:164px;height:32px;line-height:32px;text-align:center;color:#6a6d72">1000000010</div>
<div class="cell" style="left:1147px;top:224.55px;width:109px;height:32px;line-height:32px;text-align:right;padding-right:10px;color:#6a6d72">170.00</div>
<div class="cell" style="left:1257px;top:224.55px;width:109px;height:32px;line-height:32px;text-align:right;padding-right:10px;color:#6a6d72">0.00</div>
<div class="cell" style="left:1367px;top:224.55px;width:109px;height:32px;line-height:32px;text-align:center;color:#6a6d72">2026–2–7</div>
<div class="abs" style="left:0;top:257px;width:1669px;height:31px;background:#fff"></div>
<div class="abs" style="left:0;top:288px;width:1669px;height:1px;background:#dfe6ec"></div>
<div class="cell" style="left:0px;top:256.26px;width:69px;height:32px;line-height:32px;text-align:center;color:#6a6d72">8</div>
<div class="cell" style="left:70px;top:256.26px;width:141px;height:32px;line-height:32px;text-align:center;color:#6a6d72">XSDD000091</div>
<div class="cell" style="left:212px;top:256.26px;width:136px;height:32px;line-height:32px;text-align:center;color:#6a6d72">2026–2–27</div>
<div class="cell" style="left:349px;top:256.26px;width:164px;height:32px;line-height:32px;text-align:center;color:#1890ff">CGJH000031</div>
<div class="cell" style="left:514px;top:256.26px;width:109px;height:32px;line-height:32px;text-align:center;color:#67c23a">审核</div>
<div class="cell" style="left:624px;top:256.26px;width:357px;height:32px;line-height:32px;text-align:center;letter-spacing:-0.22px;color:#6a6d72">微星 MAG B760M MORTAR WIFI DDR5 主板</div>
<div class="cell" style="left:982px;top:256.26px;width:164px;height:32px;line-height:32px;text-align:center;color:#6a6d72">1000000002</div>
<div class="cell" style="left:1147px;top:256.26px;width:109px;height:32px;line-height:32px;text-align:right;padding-right:10px;color:#6a6d72">60.00</div>
<div class="cell" style="left:1257px;top:256.26px;width:109px;height:32px;line-height:32px;text-align:right;padding-right:10px;color:#6a6d72">0.00</div>
<div class="cell" style="left:1367px;top:256.26px;width:109px;height:32px;line-height:32px;text-align:center;color:#6a6d72">2026–2–6</div>
<div class="abs" style="left:0;top:289px;width:1669px;height:31px;background:#fff"></div>
<div class="abs" style="left:0;top:320px;width:1669px;height:1px;background:#dfe6ec"></div>
<div class="cell" style="left:0px;top:287.97px;width:69px;height:32px;line-height:32px;text-align:center;color:#6a6d72">9</div>
<div class="cell" style="left:70px;top:287.97px;width:141px;height:32px;line-height:32px;text-align:center;color:#6a6d72">XSDD000091</div>
<div class="cell" style="left:212px;top:287.97px;width:136px;height:32px;line-height:32px;text-align:center;color:#6a6d72">2026–2–27</div>
<div class="cell" style="left:349px;top:287.97px;width:164px;height:32px;line-height:32px;text-align:center;color:#1890ff">CGJH000031</div>
<div class="cell" style="left:514px;top:287.97px;width:109px;height:32px;line-height:32px;text-align:center;color:#67c23a">审核</div>
<div class="cell" style="left:624px;top:287.97px;width:357px;height:32px;line-height:32px;text-align:center;letter-spacing:-0.22px;color:#6a6d72">华硕 TUF–RTX 4070 SUPER–O12G–GAMING 显卡</div>
<div class="cell" style="left:982px;top:287.97px;width:164px;height:32px;line-height:32px;text-align:center;color:#6a6d72">1000000006</div>
<div class="cell" style="left:1147px;top:287.97px;width:109px;height:32px;line-height:32px;text-align:right;padding-right:10px;color:#6a6d72">60.00</div>
<div class="cell" style="left:1257px;top:287.97px;width:109px;height:32px;line-height:32px;text-align:right;padding-right:10px;color:#6a6d72">0.00</div>
<div class="cell" style="left:1367px;top:287.97px;width:109px;height:32px;line-height:32px;text-align:center;color:#6a6d72">2026–2–6</div>
<div class="abs" style="left:0;top:321px;width:1669px;height:30px;background:#fff"></div>
<div class="abs" style="left:0;top:351px;width:1669px;height:1px;background:#dfe6ec"></div>
<div class="cell" style="left:0px;top:319.68px;width:69px;height:32px;line-height:32px;text-align:center;color:#6a6d72">10</div>
<div class="cell" style="left:70px;top:319.68px;width:141px;height:32px;line-height:32px;text-align:center;color:#6a6d72">XSDD000091</div>
<div class="cell" style="left:212px;top:319.68px;width:136px;height:32px;line-height:32px;text-align:center;color:#6a6d72">2026–2–27</div>
<div class="cell" style="left:349px;top:319.68px;width:164px;height:32px;line-height:32px;text-align:center;color:#1890ff">CGJH000031</div>
<div class="cell" style="left:514px;top:319.68px;width:109px;height:32px;line-height:32px;text-align:center;color:#67c23a">审核</div>
<div class="cell" style="left:624px;top:319.68px;width:357px;height:32px;line-height:32px;text-align:center;letter-spacing:-0.22px;color:#6a6d72">三星 1TB 980 PRO PCIe 4.0 NVMe M.2 固态硬盘</div>
<div class="cell" style="left:982px;top:319.68px;width:164px;height:32px;line-height:32px;text-align:center;color:#6a6d72">1000000004</div>
<div class="cell" style="left:1147px;top:319.68px;width:109px;height:32px;line-height:32px;text-align:right;padding-right:10px;color:#6a6d72">60.00</div>
<div class="cell" style="left:1257px;top:319.68px;width:109px;height:32px;line-height:32px;text-align:right;padding-right:10px;color:#6a6d72">0.00</div>
<div class="cell" style="left:1367px;top:319.68px;width:109px;height:32px;line-height:32px;text-align:center;color:#6a6d72">2026–2–6</div>
<div class="abs" style="left:0;top:352px;width:1669px;height:31px;background:#f4f6fa"></div>
<div class="abs" style="left:0;top:383px;width:1669px;height:1px;background:#dfe6ec"></div>
<div class="cell" style="left:0px;top:351.39px;width:69px;height:32px;line-height:32px;text-align:center;color:#6a6d72">11</div>
<div class="cell" style="left:70px;top:351.39px;width:141px;height:32px;line-height:32px;text-align:center;color:#6a6d72">XSDD000076</div>
<div class="cell" style="left:212px;top:351.39px;width:136px;height:32px;line-height:32px;text-align:center;color:#6a6d72">2026–1–28</div>
<div class="cell" style="left:349px;top:351.39px;width:164px;height:32px;line-height:32px;text-align:center;color:#1890ff">CGJH000030</div>
<div class="cell" style="left:514px;top:351.39px;width:109px;height:32px;line-height:32px;text-align:center;color:#67c23a">审核</div>
<div class="cell" style="left:624px;top:351.39px;width:357px;height:32px;line-height:32px;text-align:center;letter-spacing:-0.22px;color:#6a6d72">显示器1</div>
<div class="cell" style="left:982px;top:351.39px;width:164px;height:32px;line-height:32px;text-align:center;color:#6a6d72">9990300001</div>
<div class="cell" style="left:1147px;top:351.39px;width:109px;height:32px;line-height:32px;text-align:right;padding-right:10px;color:#6a6d72">100.00</div>
<div class="cell" style="left:1257px;top:351.39px;width:109px;height:32px;line-height:32px;text-align:right;padding-right:10px;color:#6a6d72">0.00</div>
<div class="cell" style="left:1367px;top:351.39px;width:109px;height:32px;line-height:32px;text-align:center;color:#6a6d72">2026–1–27</div>
<div class="abs" style="left:0;top:384px;width:1669px;height:31px;background:#f4f6fa"></div>
<div class="abs" style="left:0;top:415px;width:1669px;height:1px;background:#dfe6ec"></div>
<div class="cell" style="left:0px;top:383.10px;width:69px;height:32px;line-height:32px;text-align:center;color:#6a6d72">12</div>
<div class="cell" style="left:70px;top:383.10px;width:141px;height:32px;line-height:32px;text-align:center;color:#6a6d72">XSDD000076</div>
<div class="cell" style="left:212px;top:383.10px;width:136px;height:32px;line-height:32px;text-align:center;color:#6a6d72">2026–1–28</div>
<div class="cell" style="left:349px;top:383.10px;width:164px;height:32px;line-height:32px;text-align:center;color:#1890ff">CGJH000030</div>
<div class="cell" style="left:514px;top:383.10px;width:109px;height:32px;line-height:32px;text-align:center;color:#67c23a">审核</div>
<div class="cell" style="left:624px;top:383.10px;width:357px;height:32px;line-height:32px;text-align:center;letter-spacing:-0.22px;color:#6a6d72">鼠标1</div>
<div class="cell" style="left:982px;top:383.10px;width:164px;height:32px;line-height:32px;text-align:center;color:#6a6d72">9990200001</div>
<div class="cell" style="left:1147px;top:383.10px;width:109px;height:32px;line-height:32px;text-align:right;padding-right:10px;color:#6a6d72">100.00</div>
<div class="cell" style="left:1257px;top:383.10px;width:109px;height:32px;line-height:32px;text-align:right;padding-right:10px;color:#6a6d72">0.00</div>
<div class="cell" style="left:1367px;top:383.10px;width:109px;height:32px;line-height:32px;text-align:center;color:#6a6d72">2026–1–27</div>
<div class="abs" style="left:0;top:416px;width:1669px;height:31px;background:#f4f6fa"></div>
<div class="abs" style="left:0;top:447px;width:1669px;height:1px;background:#dfe6ec"></div>
<div class="cell" style="left:0px;top:414.81px;width:69px;height:32px;line-height:32px;text-align:center;color:#6a6d72">13</div>
<div class="cell" style="left:70px;top:414.81px;width:141px;height:32px;line-height:32px;text-align:center;color:#6a6d72">XSDD000076</div>
<div class="cell" style="left:212px;top:414.81px;width:136px;height:32px;line-height:32px;text-align:center;color:#6a6d72">2026–1–28</div>
<div class="cell" style="left:349px;top:414.81px;width:164px;height:32px;line-height:32px;text-align:center;color:#1890ff">CGJH000030</div>
<div class="cell" style="left:514px;top:414.81px;width:109px;height:32px;line-height:32px;text-align:center;color:#67c23a">审核</div>
<div class="cell" style="left:624px;top:414.81px;width:357px;height:32px;line-height:32px;text-align:center;letter-spacing:-0.22px;color:#6a6d72">键盘1</div>
<div class="cell" style="left:982px;top:414.81px;width:164px;height:32px;line-height:32px;text-align:center;color:#6a6d72">9990100001</div>
<div class="cell" style="left:1147px;top:414.81px;width:109px;height:32px;line-height:32px;text-align:right;padding-right:10px;color:#6a6d72">100.00</div>
<div class="cell" style="left:1257px;top:414.81px;width:109px;height:32px;line-height:32px;text-align:right;padding-right:10px;color:#6a6d72">0.00</div>
<div class="cell" style="left:1367px;top:414.81px;width:109px;height:32px;line-height:32px;text-align:center;color:#6a6d72">2026–1–27</div>
<div class="abs" style="left:0;top:448px;width:1669px;height:30px;background:#f4f6fa"></div>
<div class="abs" style="left:0;top:478px;width:1669px;height:1px;background:#dfe6ec"></div>
<div class="cell" style="left:0px;top:446.52px;width:69px;height:32px;line-height:32px;text-align:center;color:#6a6d72">14</div>
<div class="cell" style="left:70px;top:446.52px;width:141px;height:32px;line-height:32px;text-align:center;color:#6a6d72">XSDD000076</div>
<div class="cell" style="left:212px;top:446.52px;width:136px;height:32px;line-height:32px;text-align:center;color:#6a6d72">2026–1–28</div>
<div class="cell" style="left:349px;top:446.52px;width:164px;height:32px;line-height:32px;text-align:center;color:#1890ff">CGJH000030</div>
<div class="cell" style="left:514px;top:446.52px;width:109px;height:32px;line-height:32px;text-align:center;color:#67c23a">审核</div>
<div class="cell" style="left:624px;top:446.52px;width:357px;height:32px;line-height:32px;text-align:center;letter-spacing:-0.22px;color:#6a6d72">显示器支架 显示器支架A123</div>
<div class="cell" style="left:982px;top:446.52px;width:164px;height:32px;line-height:32px;text-align:center;color:#6a6d72">0903000004</div>
<div class="cell" style="left:1147px;top:446.52px;width:109px;height:32px;line-height:32px;text-align:right;padding-right:10px;color:#6a6d72">100.00</div>
<div class="cell" style="left:1257px;top:446.52px;width:109px;height:32px;line-height:32px;text-align:right;padding-right:10px;color:#6a6d72">0.00</div>
<div class="cell" style="left:1367px;top:446.52px;width:109px;height:32px;line-height:32px;text-align:center;color:#6a6d72">2026–1–27</div>
<div class="abs" style="left:0;top:479px;width:1669px;height:31px;background:#fff"></div>
<div class="abs" style="left:0;top:510px;width:1669px;height:1px;background:#dfe6ec"></div>
<div class="cell" style="left:0px;top:478.23px;width:69px;height:32px;line-height:32px;text-align:center;color:#6a6d72">15</div>
<div class="cell" style="left:70px;top:478.23px;width:141px;height:32px;line-height:32px;text-align:center;color:#6a6d72">XSDD000074</div>
<div class="cell" style="left:212px;top:478.23px;width:136px;height:32px;line-height:32px;text-align:center;color:#6a6d72">2026–1–30</div>
<div class="cell" style="left:349px;top:478.23px;width:164px;height:32px;line-height:32px;text-align:center;color:#1890ff">CGJH000029</div>
<div class="cell" style="left:514px;top:478.23px;width:109px;height:32px;line-height:32px;text-align:center;color:#67c23a">审核</div>
<div class="cell" style="left:624px;top:478.23px;width:357px;height:32px;line-height:32px;text-align:center;letter-spacing:-0.22px;color:#13ce66">核心电机</div>
<div class="cell" style="left:982px;top:478.23px;width:164px;height:32px;line-height:32px;text-align:center;color:#6a6d72">0802000001</div>
<div class="cell" style="left:1147px;top:478.23px;width:109px;height:32px;line-height:32px;text-align:right;padding-right:10px;color:#6a6d72">50.00</div>
<div class="cell" style="left:1257px;top:478.23px;width:109px;height:32px;line-height:32px;text-align:right;padding-right:10px;color:#6a6d72">50.00</div>
<div class="cell" style="left:1367px;top:478.23px;width:109px;height:32px;line-height:32px;text-align:center;color:#6a6d72">2026–1–27</div>
<div class="abs" style="left:0;top:511px;width:1669px;height:31px;background:#fff"></div>
<div class="abs" style="left:0;top:542px;width:1669px;height:1px;background:#dfe6ec"></div>
<div class="cell" style="left:0px;top:509.94px;width:69px;height:32px;line-height:32px;text-align:center;color:#6a6d72">16</div>
<div class="cell" style="left:70px;top:509.94px;width:141px;height:32px;line-height:32px;text-align:center;color:#6a6d72">XSDD000074</div>
<div class="cell" style="left:212px;top:509.94px;width:136px;height:32px;line-height:32px;text-align:center;color:#6a6d72">2026–1–30</div>
<div class="cell" style="left:349px;top:509.94px;width:164px;height:32px;line-height:32px;text-align:center;color:#1890ff">CGJH000029</div>
<div class="cell" style="left:514px;top:509.94px;width:109px;height:32px;line-height:32px;text-align:center;color:#67c23a">审核</div>
<div class="cell" style="left:624px;top:509.94px;width:357px;height:32px;line-height:32px;text-align:center;letter-spacing:-0.22px;color:#13ce66">型钢6米</div>
<div class="cell" style="left:982px;top:509.94px;width:164px;height:32px;line-height:32px;text-align:center;color:#6a6d72">0401000001</div>
<div class="cell" style="left:1147px;top:509.94px;width:109px;height:32px;line-height:32px;text-align:right;padding-right:10px;color:#6a6d72">50.00</div>
<div class="cell" style="left:1257px;top:509.94px;width:109px;height:32px;line-height:32px;text-align:right;padding-right:10px;color:#6a6d72">50.00</div>
<div class="cell" style="left:1367px;top:509.94px;width:109px;height:32px;line-height:32px;text-align:center;color:#6a6d72">2026–1–27</div>
<div class="abs" style="left:0;top:543px;width:1669px;height:30px;background:#fff"></div>
<div class="abs" style="left:0;top:573px;width:1669px;height:1px;background:#dfe6ec"></div>
<div class="cell" style="left:0px;top:541.65px;width:69px;height:32px;line-height:32px;text-align:center;color:#6a6d72">17</div>
<div class="cell" style="left:70px;top:541.65px;width:141px;height:32px;line-height:32px;text-align:center;color:#6a6d72">XSDD000074</div>
<div class="cell" style="left:212px;top:541.65px;width:136px;height:32px;line-height:32px;text-align:center;color:#6a6d72">2026–1–30</div>
<div class="cell" style="left:349px;top:541.65px;width:164px;height:32px;line-height:32px;text-align:center;color:#1890ff">CGJH000029</div>
<div class="cell" style="left:514px;top:541.65px;width:109px;height:32px;line-height:32px;text-align:center;color:#67c23a">审核</div>
<div class="cell" style="left:624px;top:541.65px;width:357px;height:32px;line-height:32px;text-align:center;letter-spacing:-0.22px;color:#13ce66">管件1</div>
<div class="cell" style="left:982px;top:541.65px;width:164px;height:32px;line-height:32px;text-align:center;color:#6a6d72">0403000001</div>
<div class="cell" style="left:1147px;top:541.65px;width:109px;height:32px;line-height:32px;text-align:right;padding-right:10px;color:#6a6d72">100.00</div>
<div class="cell" style="left:1257px;top:541.65px;width:109px;height:32px;line-height:32px;text-align:right;padding-right:10px;color:#6a6d72">100.00</div>
<div class="cell" style="left:1367px;top:541.65px;width:109px;height:32px;line-height:32px;text-align:center;color:#6a6d72">2026–1–27</div>
<div class="abs" style="left:0;top:574px;width:1669px;height:31px;background:#f4f6fa"></div>
<div class="abs" style="left:0;top:605px;width:1669px;height:1px;background:#dfe6ec"></div>
<div class="cell" style="left:0px;top:573.36px;width:69px;height:32px;line-height:32px;text-align:center;color:#6a6d72">18</div>
<div class="cell" style="left:70px;top:573.36px;width:141px;height:32px;line-height:32px;text-align:center;color:#6a6d72">XSDD000067</div>
<div class="cell" style="left:212px;top:573.36px;width:136px;height:32px;line-height:32px;text-align:center;color:#6a6d72">2026–1–29</div>
<div class="cell" style="left:349px;top:573.36px;width:164px;height:32px;line-height:32px;text-align:center;color:#1890ff">CGJH000028</div>
<div class="cell" style="left:514px;top:573.36px;width:109px;height:32px;line-height:32px;text-align:center;color:#67c23a">审核</div>
<div class="cell" style="left:624px;top:573.36px;width:357px;height:32px;line-height:32px;text-align:center;letter-spacing:-0.22px;color:#6a6d72">可编程控制器模块 TM3TI8T</div>
<div class="cell" style="left:982px;top:573.36px;width:164px;height:32px;line-height:32px;text-align:center;color:#6a6d72">0303000013</div>
<div class="cell" style="left:1147px;top:573.36px;width:109px;height:32px;line-height:32px;text-align:right;padding-right:10px;color:#6a6d72">10.00</div>
<div class="cell" style="left:1257px;top:573.36px;width:109px;height:32px;line-height:32px;text-align:right;padding-right:10px;color:#6a6d72">0.00</div>
<div class="cell" style="left:1367px;top:573.36px;width:109px;height:32px;line-height:32px;text-align:center;color:#6a6d72">2026–1–26</div>
<div class="abs" style="left:0;top:606px;width:1669px;height:31px;background:#fff"></div>
<div class="abs" style="left:0;top:637px;width:1669px;height:1px;background:#dfe6ec"></div>
<div class="cell" style="left:0px;top:605.07px;width:69px;height:32px;line-height:32px;text-align:center;color:#6a6d72">19</div>
<div class="cell" style="left:70px;top:605.07px;width:141px;height:32px;line-height:32px;text-align:center;color:#6a6d72">XSDD000062</div>
<div class="cell" style="left:212px;top:605.07px;width:136px;height:32px;line-height:32px;text-align:center;color:#6a6d72">2026–1–31</div>
<div class="cell" style="left:349px;top:605.07px;width:164px;height:32px;line-height:32px;text-align:center;color:#1890ff">CGJH000027</div>
<div class="cell" style="left:514px;top:605.07px;width:109px;height:32px;line-height:32px;text-align:center;color:#67c23a">审核</div>
<div class="cell" style="left:624px;top:605.07px;width:357px;height:32px;line-height:32px;text-align:center;letter-spacing:-0.22px;color:#13ce66">钣金铰链件 Φ20圆杆 总长LH=1520</div>
<div class="cell" style="left:982px;top:605.07px;width:164px;height:32px;line-height:32px;text-align:center;color:#6a6d72">0301000004</div>
<div class="cell" style="left:1147px;top:605.07px;width:109px;height:32px;line-height:32px;text-align:right;padding-right:10px;color:#6a6d72">100.00</div>
<div class="cell" style="left:1257px;top:605.07px;width:109px;height:32px;line-height:32px;text-align:right;padding-right:10px;color:#6a6d72">100.00</div>
<div class="cell" style="left:1367px;top:605.07px;width:109px;height:32px;line-height:32px;text-align:center;color:#6a6d72">2026–1–25</div>
<div class="abs" style="left:0;top:638px;width:1669px;height:30px;background:#fff"></div>
<div class="abs" style="left:0;top:668px;width:1669px;height:1px;background:#dfe6ec"></div>
<div class="cell" style="left:0px;top:636.78px;width:69px;height:32px;line-height:32px;text-align:center;color:#6a6d72">20</div>
<div class="cell" style="left:70px;top:636.78px;width:141px;height:32px;line-height:32px;text-align:center;color:#6a6d72">XSDD000062</div>
<div class="cell" style="left:212px;top:636.78px;width:136px;height:32px;line-height:32px;text-align:center;color:#6a6d72">2026–1–31</div>
<div class="cell" style="left:349px;top:636.78px;width:164px;height:32px;line-height:32px;text-align:center;color:#1890ff">CGJH000027</div>
<div class="cell" style="left:514px;top:636.78px;width:109px;height:32px;line-height:32px;text-align:center;color:#67c23a">审核</div>
<div class="cell" style="left:624px;top:636.78px;width:357px;height:32px;line-height:32px;text-align:center;letter-spacing:-0.22px;color:#13ce66">风机旋涡气泵</div>
<div class="cell" style="left:982px;top:636.78px;width:164px;height:32px;line-height:32px;text-align:center;color:#6a6d72">0302000002</div>
<div class="cell" style="left:1147px;top:636.78px;width:109px;height:32px;line-height:32px;text-align:right;padding-right:10px;color:#6a6d72">100.00</div>
<div class="cell" style="left:1257px;top:636.78px;width:109px;height:32px;line-height:32px;text-align:right;padding-right:10px;color:#6a6d72">100.00</div>
<div class="cell" style="left:1367px;top:636.78px;width:109px;height:32px;line-height:32px;text-align:center;color:#6a6d72">2026–1–25</div>
<div class="abs" style="left:0;top:669px;width:1669px;height:31px;background:#fff"></div>
<div class="abs" style="left:0;top:700px;width:1669px;height:1px;background:#dfe6ec"></div>
<div class="cell" style="left:0px;top:668.49px;width:69px;height:32px;line-height:32px;text-align:center;color:#6a6d72">21</div>
<div class="cell" style="left:70px;top:668.49px;width:141px;height:32px;line-height:32px;text-align:center;color:#6a6d72">XSDD000062</div>
<div class="cell" style="left:212px;top:668.49px;width:136px;height:32px;line-height:32px;text-align:center;color:#6a6d72">2026–1–31</div>
<div class="cell" style="left:349px;top:668.49px;width:164px;height:32px;line-height:32px;text-align:center;color:#1890ff">CGJH000027</div>
<div class="cell" style="left:514px;top:668.49px;width:109px;height:32px;line-height:32px;text-align:center;color:#67c23a">审核</div>
<div class="cell" style="left:624px;top:668.49px;width:357px;height:32px;line-height:32px;text-align:center;letter-spacing:-0.22px;color:#13ce66">色标传感器 Z3N–T22</div>
<div class="cell" style="left:982px;top:668.49px;width:164px;height:32px;line-height:32px;text-align:center;color:#6a6d72">0303000004</div>
<div class="cell" style="left:1147px;top:668.49px;width:109px;height:32px;line-height:32px;text-align:right;padding-right:10px;color:#6a6d72">100.00</div>
<div class="cell" style="left:1257px;top:668.49px;width:109px;height:32px;line-height:32px;text-align:right;padding-right:10px;color:#6a6d72">100.00</div>
<div class="cell" style="left:1367px;top:668.49px;width:109px;height:32px;line-height:32px;text-align:center;color:#6a6d72">2026–1–25</div>
<div class="abs" style="left:0;top:701px;width:1669px;height:31px;background:#f4f6fa"></div>
<div class="abs" style="left:0;top:732px;width:1669px;height:1px;background:#dfe6ec"></div>
<div class="cell" style="left:0px;top:700.20px;width:69px;height:32px;line-height:32px;text-align:center;color:#6a6d72">22</div>
<div class="cell" style="left:70px;top:700.20px;width:141px;height:32px;line-height:32px;text-align:center;color:#6a6d72">XSDD000062</div>
<div class="cell" style="left:212px;top:700.20px;width:136px;height:32px;line-height:32px;text-align:center;color:#6a6d72">2026–1–31</div>
<div class="cell" style="left:349px;top:700.20px;width:164px;height:32px;line-height:32px;text-align:center;color:#1890ff">CGJH000026</div>
<div class="cell" style="left:514px;top:700.20px;width:109px;height:32px;line-height:32px;text-align:center;color:#e6a23c">开立</div>
<div class="cell" style="left:624px;top:700.20px;width:357px;height:32px;line-height:32px;text-align:center;letter-spacing:-0.22px;color:#6a6d72">钣金铰链件 Φ20圆杆 总长LH=1520</div>
<div class="cell" style="left:982px;top:700.20px;width:164px;height:32px;line-height:32px;text-align:center;color:#6a6d72">0301000004</div>
<div class="cell" style="left:1147px;top:700.20px;width:109px;height:32px;line-height:32px;text-align:right;padding-right:10px;color:#6a6d72">100.00</div>
<div class="cell" style="left:1257px;top:700.20px;width:109px;height:32px;line-height:32px;text-align:right;padding-right:10px;color:#6a6d72">0.00</div>
<div class="cell" style="left:1367px;top:700.20px;width:109px;height:32px;line-height:32px;text-align:center;color:#6a6d72">2026–1–23</div>
<div class="abs" style="left:0;top:733px;width:1669px;height:31px;background:#f4f6fa"></div>
<div class="abs" style="left:0;top:764px;width:1669px;height:1px;background:#dfe6ec"></div>
<div class="cell" style="left:0px;top:731.91px;width:69px;height:32px;line-height:32px;text-align:center;color:#6a6d72">23</div>
<div class="cell" style="left:70px;top:731.91px;width:141px;height:32px;line-height:32px;text-align:center;color:#6a6d72">XSDD000062</div>
<div class="cell" style="left:212px;top:731.91px;width:136px;height:32px;line-height:32px;text-align:center;color:#6a6d72">2026–1–31</div>
<div class="cell" style="left:349px;top:731.91px;width:164px;height:32px;line-height:32px;text-align:center;color:#1890ff">CGJH000026</div>
<div class="cell" style="left:514px;top:731.91px;width:109px;height:32px;line-height:32px;text-align:center;color:#e6a23c">开立</div>
<div class="cell" style="left:624px;top:731.91px;width:357px;height:32px;line-height:32px;text-align:center;letter-spacing:-0.22px;color:#6a6d72">风机旋涡气泵</div>
<div class="cell" style="left:982px;top:731.91px;width:164px;height:32px;line-height:32px;text-align:center;color:#6a6d72">0302000002</div>
<div class="cell" style="left:1147px;top:731.91px;width:109px;height:32px;line-height:32px;text-align:right;padding-right:10px;color:#6a6d72">100.00</div>
<div class="cell" style="left:1257px;top:731.91px;width:109px;height:32px;line-height:32px;text-align:right;padding-right:10px;color:#6a6d72">0.00</div>
<div class="cell" style="left:1367px;top:731.91px;width:109px;height:32px;line-height:32px;text-align:center;color:#6a6d72">2026–1–23</div>
<div class="abs" style="left:0;top:765px;width:1669px;height:30px;background:#f4f6fa"></div>
<div class="abs" style="left:0;top:795px;width:1669px;height:1px;background:#dfe6ec"></div>
<div class="cell" style="left:0px;top:763.62px;width:69px;height:32px;line-height:32px;text-align:center;color:#6a6d72">24</div>
<div class="cell" style="left:70px;top:763.62px;width:141px;height:32px;line-height:32px;text-align:center;color:#6a6d72">XSDD000062</div>
<div class="cell" style="left:212px;top:763.62px;width:136px;height:32px;line-height:32px;text-align:center;color:#6a6d72">2026–1–31</div>
<div class="cell" style="left:349px;top:763.62px;width:164px;height:32px;line-height:32px;text-align:center;color:#1890ff">CGJH000026</div>
<div class="cell" style="left:514px;top:763.62px;width:109px;height:32px;line-height:32px;text-align:center;color:#e6a23c">开立</div>
<div class="cell" style="left:624px;top:763.62px;width:357px;height:32px;line-height:32px;text-align:center;letter-spacing:-0.22px;color:#6a6d72">色标传感器 Z3N–T22</div>
<div class="cell" style="left:982px;top:763.62px;width:164px;height:32px;line-height:32px;text-align:center;color:#6a6d72">0303000004</div>
<div class="cell" style="left:1147px;top:763.62px;width:109px;height:32px;line-height:32px;text-align:right;padding-right:10px;color:#6a6d72">100.00</div>
<div class="cell" style="left:1257px;top:763.62px;width:109px;height:32px;line-height:32px;text-align:right;padding-right:10px;color:#6a6d72">0.00</div>
<div class="cell" style="left:1367px;top:763.62px;width:109px;height:32px;line-height:32px;text-align:center;color:#6a6d72">2026–1–23</div>
<div class="abs" style="left:0;top:796px;width:1669px;height:31px;background:#fff"></div>
<div class="abs" style="left:0;top:827px;width:1669px;height:1px;background:#dfe6ec"></div>
<div class="cell" style="left:0px;top:795.33px;width:69px;height:32px;line-height:32px;text-align:center;color:#6a6d72">25</div>
<div class="cell" style="left:70px;top:795.33px;width:141px;height:32px;line-height:32px;text-align:center;color:#6a6d72">XSDD000049</div>
<div class="cell" style="left:212px;top:795.33px;width:136px;height:32px;line-height:32px;text-align:center;color:#6a6d72">2026–1–21</div>
<div class="cell" style="left:349px;top:795.33px;width:164px;height:32px;line-height:32px;text-align:center;color:#1890ff">CGJH000025</div>
<div class="cell" style="left:514px;top:795.33px;width:109px;height:32px;line-height:32px;text-align:center;color:#67c23a">审核</div>
<div class="cell" style="left:624px;top:795.33px;width:357px;height:32px;line-height:32px;text-align:center;letter-spacing:-0.22px;color:#13ce66">风机旋涡气泵</div>
<div class="cell" style="left:982px;top:795.33px;width:164px;height:32px;line-height:32px;text-align:center;color:#6a6d72">0302000002</div>
<div class="cell" style="left:1147px;top:795.33px;width:109px;height:32px;line-height:32px;text-align:right;padding-right:10px;color:#6a6d72">10.00</div>
<div class="cell" style="left:1257px;top:795.33px;width:109px;height:32px;line-height:32px;text-align:right;padding-right:10px;color:#6a6d72">10.00</div>
<div class="cell" style="left:1367px;top:795.33px;width:109px;height:32px;line-height:32px;text-align:center;color:#6a6d72">2026–1–18</div>
<div class="abs" style="left:0;top:828px;width:1669px;height:29px;background:#f4f6fa"></div>
<div class="cell" style="left:0px;top:827.04px;width:69px;height:32px;line-height:32px;text-align:center;color:#6a6d72">26</div>
<div class="cell" style="left:70px;top:827.04px;width:141px;height:32px;line-height:32px;text-align:center;color:#6a6d72">XSDD000031</div>
<div class="cell" style="left:212px;top:827.04px;width:136px;height:32px;line-height:32px;text-align:center;color:#6a6d72">2026–1–24</div>
<div class="cell" style="left:349px;top:827.04px;width:164px;height:32px;line-height:32px;text-align:center;color:#1890ff">CGJH000024</div>
<div class="cell" style="left:514px;top:827.04px;width:109px;height:32px;line-height:32px;text-align:center;color:#909399">退回</div>
<div class="cell" style="left:624px;top:827.04px;width:357px;height:32px;line-height:32px;text-align:center;letter-spacing:-0.22px;color:#6a6d72">三相异步电机</div>
<div class="cell" style="left:982px;top:827.04px;width:164px;height:32px;line-height:32px;text-align:center;color:#6a6d72">0302000001</div>
<div class="cell" style="left:1147px;top:827.04px;width:109px;height:32px;line-height:32px;text-align:right;padding-right:10px;color:#6a6d72">1.00</div>
<div class="cell" style="left:1257px;top:827.04px;width:109px;height:32px;line-height:32px;text-align:right;padding-right:10px;color:#6a6d72">0.00</div>
<div class="cell" style="left:1367px;top:827.04px;width:109px;height:32px;line-height:32px;text-align:center;color:#6a6d72">2026–1–17</div>
<div class="abs" style="left:69px;top:0;width:1px;height:1000px;background:#dfe6ec"></div>
<div class="abs" style="left:211px;top:0;width:1px;height:1000px;background:#dfe6ec"></div>
<div class="abs" style="left:348px;top:0;width:1px;height:1000px;background:#dfe6ec"></div>
<div class="abs" style="left:513px;top:0;width:1px;height:1000px;background:#dfe6ec"></div>
<div class="abs" style="left:623px;top:0;width:1px;height:1000px;background:#dfe6ec"></div>
<div class="abs" style="left:981px;top:0;width:1px;height:1000px;background:#dfe6ec"></div>
<div class="abs" style="left:1146px;top:0;width:1px;height:1000px;background:#dfe6ec"></div>
<div class="abs" style="left:1256px;top:0;width:1px;height:1000px;background:#dfe6ec"></div>
<div class="abs" style="left:1366px;top:0;width:1px;height:1000px;background:#dfe6ec"></div>
<div class="abs" style="left:1476px;top:0;width:1px;height:1000px;background:#dfe6ec"></div>
<div class="abs" style="left:1669px;top:0;width:1px;height:1000px;background:#dfe6ec"></div>
<div class="abs" style="left:1670px;top:35.40px;width:14px;height:900px;background:#fafafa;border-left:1px solid #e8e8e8"></div>
<div class="abs" style="left:1674px;top:37.5px;width:8px;height:298.5px;background:#c1c1c1;border-radius:4px"></div>
</div>
<div class="txt" style="left:215px;top:1036px;font-size:14px;line-height:18px;color:#606266">采购数量：15,084,075</div>
<div class="txt" style="left:370px;top:1036px;font-size:14px;line-height:18px;color:#606266">已订数量：68,549</div>
<div class="txt" style="left:1467px;top:1042px;font-size:14px;line-height:18px;color:#606266">共 70 条</div>
<div class="abs" style="left:1534px;top:1037px;width:100px;height:28px;border:1px solid #dcdfe6;border-radius:3px;font-size:14px;line-height:26px;color:#606266"><span class="abs" style="left:15px;top:0">100条/页</span><svg class="abs" style="left:81px;top:11px" width="9" height="6" viewBox="0 0 9 6"><path d="M0.5 0.5L4.5 4.5L8.5 0.5" stroke="#c0c4cc" fill="none"/></svg></div>
<div class="abs" style="left:1655px;top:1037px;width:31px;height:28px;background:#f4f4f5;border-radius:2px"><svg class="abs" style="left:12px;top:9px" width="6" height="10" viewBox="0 0 6 10"><path d="M5 0.5L0.8 5L5 9.5" stroke="#c0c4cc" fill="none"/></svg></div>
<div class="abs" style="left:1697px;top:1037px;width:31px;height:28px;background:#1890ff;border-radius:2px;color:#fff;font-size:14px;line-height:28px;text-align:center">1</div>
<div class="abs" style="left:1739px;top:1037px;width:31px;height:28px;background:#f4f4f5;border-radius:2px"><svg class="abs" style="left:13px;top:9px" width="6" height="10" viewBox="0 0 6 10"><path d="M0.8 0.5L5 5L0.8 9.5" stroke="#c0c4cc" fill="none"/></svg></div>
<div class="txt" style="left:1801px;top:1042px;font-size:14px;line-height:18px;color:#606266">前往</div>
<div class="abs" style="left:1832px;top:1037px;width:46px;height:28px;border:1px solid #dcdfe6;border-radius:3px;font-size:14px;line-height:26px;color:#606266;text-align:center">1</div>
<div class="txt" style="left:1882px;top:1042px;font-size:14px;line-height:18px;color:#606266">页</div>
</body></html>
